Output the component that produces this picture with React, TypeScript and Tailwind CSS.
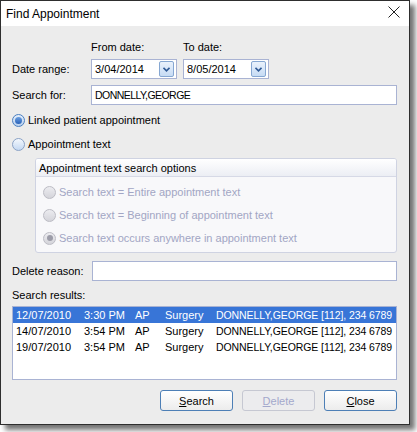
import React from "react";

const font = { fontFamily: '"Liberation Sans", Arial, sans-serif' };

function Radio({ checked, disabled }: { checked?: boolean; disabled?: boolean }) {
  if (disabled) {
    return (
      <div className="w-[13px] h-[13px] rounded-full border border-[#bcbcc4] bg-gradient-to-b from-[#ececf0] to-[#d4d4da] flex items-center justify-center shrink-0">
        {checked && <div className="w-[6px] h-[6px] rounded-full bg-[#9c9ca8]" />}
      </div>
    );
  }
  return (
    <div
      className={
        "w-[13px] h-[13px] rounded-full border flex items-center justify-center shrink-0 " +
        (checked
          ? "border-[#4a7fc0] bg-gradient-to-b from-[#e4eefa] to-[#b8d0ee]"
          : "border-[#8aa2c6] bg-gradient-to-b from-[#f4f8fd] to-[#c4d8f2]")
      }
    >
      {checked && <div className="w-[7px] h-[7px] rounded-full bg-gradient-to-b from-[#6a9ee0] to-[#2a62b8]" />}
    </div>
  );
}

function DateBox({ value }: { value: string }) {
  return (
    <div className="w-[86px] h-[20px] bg-white border border-[#a9b3d3] flex items-center pl-[3px] pr-[2px] justify-between">
      <span className="text-[11px] text-black leading-none">{value}</span>
      <div className="w-[15px] h-[16px] rounded-[2px] border border-[#86a7d2] bg-gradient-to-b from-[#eaf2fc] to-[#c6dbf4] flex items-center justify-center">
        <svg width="7" height="5" viewBox="0 0 7 5">
          <path d="M0.5 0.8 L3.5 3.8 L6.5 0.8" fill="none" stroke="#2f5a96" strokeWidth="1.6" />
        </svg>
      </div>
    </div>
  );
}

const rows = [
  ["12/07/2010", "3:30 PM", "AP", "Surgery", "DONNELLY,GEORGE [112], 234 6789"],
  ["14/07/2010", "3:54 PM", "AP", "Surgery", "DONNELLY,GEORGE [112], 234 6789"],
  ["19/07/2010", "3:54 PM", "AP", "Surgery", "DONNELLY,GEORGE [112], 234 6789"],
];

function Btn({ label, disabled }: { label: string; disabled?: boolean }) {
  return (
    <div
      className={
        "w-[73px] h-[21px] rounded-[3px] border flex items-center justify-center text-[11px] " +
        (disabled
          ? "border-[#c6c8d2] bg-[#ececee] text-[#a3a8cc]"
          : "border-[#4d7fb6] bg-gradient-to-b from-[#ffffff] to-[#ececec] text-black")
      }
    >
      <span>
        <span className="underline">{label[0]}</span>
        {label.slice(1)}
      </span>
    </div>
  );
}

export default function App() {
  return (
    <div className="w-[417px] h-[432px] bg-white relative" style={font}>
      <div className="w-[410px] h-[425px] border border-[#2e2e2e] bg-[#ececec] shadow-[5px_5px_5px_rgba(0,0,0,0.55)] flex flex-col">
        <div className="h-[25px] bg-white flex items-center justify-between pl-[5px] pr-[9px] shrink-0">
          <span className="text-[12px] text-black">Find Appointment</span>
          <svg width="12" height="12" viewBox="0 0 12 12" className="mb-[3px]">
            <path d="M0.5 0.5 L11.5 11.5 M11.5 0.5 L0.5 11.5" stroke="#222" strokeWidth="1" />
          </svg>
        </div>
        <div className="flex flex-col pl-[11px] pr-[12px] text-[11px] text-black leading-[14px]">
          <div className="flex mt-[14px] h-[14px]">
            <div className="w-[79px]" />
            <div className="w-[92px]">From date:</div>
            <div>To date:</div>
          </div>
          <div className="flex items-center mt-[5px] h-[20px]">
            <div className="w-[79px]">Date range:</div>
            <DateBox value="3/04/2014" />
            <div className="w-[6px]" />
            <DateBox value="8/05/2014" />
          </div>
          <div className="flex items-center mt-[6px] h-[20px]">
            <div className="w-[79px]">Search for:</div>
            <div className="flex-1 h-[20px] bg-white border border-[#a9b3d3] flex items-center pl-[3px]">
              <span className="text-[10.5px] tracking-[-0.55px]">DONNELLY,GEORGE</span>
            </div>
          </div>
          <div className="flex items-center mt-[8px] h-[14px] gap-[3px]">
            <Radio checked />
            <span>Linked patient appointment</span>
          </div>
          <div className="flex items-center mt-[10px] h-[14px] gap-[3px]">
            <Radio />
            <span>Appointment text</span>
          </div>
          <div className="ml-[23px] mt-[7px] h-[95px] flex flex-col rounded-[3px] border border-[#cfd3e2] bg-[#f8f8fa] overflow-hidden">
            <div className="h-[18px] flex items-center pl-[3px] bg-gradient-to-b from-[#ffffff] to-[#eceef4] border-b border-[#d6d9e6]">
              Appointment text search options
            </div>
            <div className="flex flex-col pl-[7px] text-[#a2a6c4]">
              <div className="flex items-center mt-[8px] h-[14px] gap-[3px]">
                <Radio disabled />
                <span>Search text = Entire appointment text</span>
              </div>
              <div className="flex items-center mt-[9px] h-[14px] gap-[3px]">
                <Radio disabled />
                <span>Search text = Beginning of appointment text</span>
              </div>
              <div className="flex items-center mt-[9px] h-[14px] gap-[3px]">
                <Radio disabled checked />
                <span>Search text occurs anywhere in appointment text</span>
              </div>
            </div>
          </div>
          <div className="flex items-center mt-[8px] h-[20px]">
            <div className="w-[80px]">Delete reason:</div>
            <div className="flex-1 h-[20px] bg-white border border-[#a9b3d3]" />
          </div>
          <div className="mt-[7px] h-[14px]">Search results:</div>
          <div className="mt-[4px] h-[74px] bg-white border border-[#a9b3d3] flex flex-col overflow-hidden">
            {rows.map((r, i) => (
              <div
                key={i}
                className={"flex items-center h-[16px] pl-[3px] whitespace-nowrap shrink-0 " + (i === 0 ? "bg-[#3875d7] text-white" : "text-black")}
              >
                <div className="w-[68px] shrink-0">{r[0]}</div>
                <div className="w-[51px] shrink-0">{r[1]}</div>
                <div className="w-[30px] shrink-0">{r[2]}</div>
                <div className="w-[51px] shrink-0">{r[3]}</div>
                <div className="whitespace-nowrap text-[10.5px] tracking-[-0.08px]">{r[4]}</div>
              </div>
            ))}
          </div>
          <div className="flex justify-end gap-[9px] mt-[10px]">
            <Btn label="Search" />
            <Btn label="Delete" disabled />
            <Btn label="Close" />
          </div>
        </div>
      </div>
    </div>
  );
}
